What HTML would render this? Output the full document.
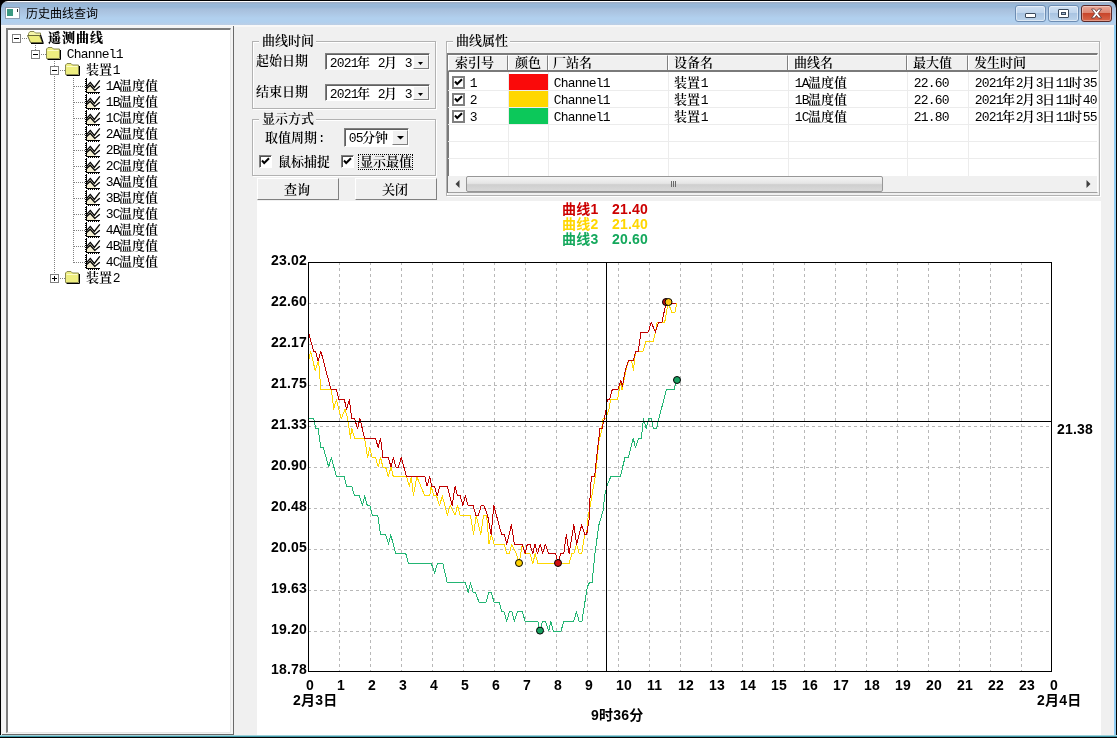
<!DOCTYPE html><html><head><meta charset="utf-8"><title>历史曲线查询</title><style>
html,body{margin:0;padding:0;}
body{width:1117px;height:738px;overflow:hidden;background:#f0f0f0;position:relative;font-family:"Liberation Mono","Noto Serif CJK SC",serif;font-size:13px;color:#000;}
div,span,svg{position:absolute;box-sizing:border-box;}
span.l{position:static;font-family:"Liberation Mono",monospace;letter-spacing:-0.8px;margin-left:0.7px;margin-right:-0.7px;}
.t{white-space:pre;line-height:15px;height:15px;font-weight:600;}
.t span.l{font-weight:400;}
.tb{white-space:pre;line-height:15px;height:15px;font-weight:900;font-size:13px;letter-spacing:1px;}
.tb span.l{font-weight:bold;}
.ti{white-space:pre;font-family:"Liberation Sans","Noto Sans CJK SC",sans-serif;font-size:12px;line-height:16px;}
.c{letter-spacing:0.2px;white-space:pre;font-family:"Liberation Sans","Noto Sans CJK SC",sans-serif;font-weight:bold;font-size:14px;line-height:16px;height:16px;}
.gb{border:1px solid #b2b2b2;box-shadow:1px 1px 0 #fff, inset 1px 1px 0 #fff;}
.gl{background:#f0f0f0;height:14px;}
.sunk{border:1px solid #808080;border-right-color:#fff;border-bottom-color:#fff;box-shadow:inset 1px 1px 0 #606060;background:#fff;}
.btn{background:#f0f0f0;border-top:1px solid #fff;border-left:1px solid #fff;border-right:1px solid #808080;border-bottom:1px solid #808080;}
.cb{width:13px;height:13px;background:#fff;border:1px solid #808080;border-right-color:#fff;border-bottom-color:#fff;box-shadow:inset 1px 1px 0 #505050;}
.hd{top:0;height:17px;background:#f0f0f0;border-right:1px solid #808080;border-bottom:1px solid #808080;border-top:1px solid #fff;border-left:1px solid #fff;}
</style></head><body><div style="left:0;top:0;width:1117px;height:738px;will-change:transform;">
<div style="left:0;top:0;width:1117px;height:25px;background:#000;"></div>
<div style="left:1px;top:1px;width:1115px;height:24px;border-radius:7px 7px 0 0;background:linear-gradient(to bottom,#ffffff 0,#ffffff 1px,#9eafc6 1px,#9eafc6 2px,#98b8d8 3px,#98b8d8 6px,#a6bfdc 8px,#acc6e3 12px,#b1d0ee 17px,#b1d0ee 21px,#bccee5 24px);"></div>
<div style="left:5px;top:7px;width:15px;height:12px;background:#fff;border:1px solid #8f9db0;"></div>
<div style="left:7px;top:9px;width:6px;height:7px;background:#3c9a82;"></div>
<div style="left:17px;top:9px;width:1px;height:3px;background:#333;"></div>
<div class="ti" style="left:26px;top:6px;">历史曲线查询</div>
<div style="left:1015px;top:5px;width:31px;height:17px;border-radius:3px;border:1px solid #6d8db3;background:linear-gradient(#cfe0f2 0%,#c0d5ec 45%,#a9c4e2 50%,#bcd3ea 100%);box-shadow:inset 0 0 0 1px rgba(255,255,255,.5);"></div>
<div style="left:1048px;top:5px;width:31px;height:17px;border-radius:3px;border:1px solid #6d8db3;background:linear-gradient(#cfe0f2 0%,#c0d5ec 45%,#a9c4e2 50%,#bcd3ea 100%);box-shadow:inset 0 0 0 1px rgba(255,255,255,.5);"></div>
<div style="left:1081px;top:5px;width:31px;height:17px;border-radius:3px;border:1px solid #5a2a2a;background:linear-gradient(#e9a99a 0%,#dd8672 45%,#c8452b 50%,#d8664a 100%);box-shadow:inset 0 0 0 1px rgba(255,255,255,.35);"></div>
<div style="left:1025px;top:13px;width:11px;height:5px;background:#fff;border:1px solid #3c4a5c;border-radius:1px;"></div>
<div style="left:1058px;top:9px;width:11px;height:9px;background:#fff;border:1px solid #3c4a5c;border-radius:1px;"></div>
<div style="left:1061px;top:12px;width:5px;height:3px;background:#9db4cf;border:1px solid #3c4a5c;"></div>
<svg style="left:1090px;top:8px" width="13" height="11" viewBox="0 0 13 11"><path d="M1.5 1 L4.5 1 L6.5 3.6 L8.5 1 L11.5 1 L8.2 5.5 L11.5 10 L8.5 10 L6.5 7.4 L4.5 10 L1.5 10 L4.8 5.5 Z" fill="#fff" stroke="#5a3030" stroke-width="0.8"/></svg>
<div style="left:1px;top:25px;width:1113px;height:711px;background:#f0f0f0;"></div>
<div style="left:1px;top:25px;width:1113px;height:2px;background:#f8f8f8;"></div>
<div style="left:1114px;top:25px;width:2px;height:712px;background:#8fcdf3;"></div>
<div style="left:1116px;top:6px;width:1px;height:732px;background:#000;"></div>
<div style="left:0;top:6px;width:1px;height:732px;background:#000;"></div>
<div style="left:0;top:735px;width:1117px;height:1px;background:#9fd0d8;"></div>
<div style="left:0;top:736px;width:1117px;height:1px;background:#3f97a6;"></div>
<div style="left:0;top:737px;width:1117px;height:1px;background:#000;"></div>
<div style="left:2px;top:26px;width:232px;height:709px;background:#f4f4f4;border-right:1px solid #696969;border-bottom:1px solid #696969;"></div>
<div style="left:6px;top:28px;width:225px;height:705px;background:#fff;border:2px solid #7c7c7c;border-right:1px solid #e8e8e8;border-bottom:1px solid #e8e8e8;"></div>
<div style="left:22px;top:38px;width:5px;height:1px;background:repeating-linear-gradient(to right,#808080 0 1px,transparent 1px 2px);"></div>
<div style="left:35px;top:45px;width:1px;height:5px;background:repeating-linear-gradient(to bottom,#808080 0 1px,transparent 1px 2px);"></div>
<div style="left:41px;top:54px;width:5px;height:1px;background:repeating-linear-gradient(to right,#808080 0 1px,transparent 1px 2px);"></div>
<div style="left:54px;top:61px;width:1px;height:5px;background:repeating-linear-gradient(to bottom,#808080 0 1px,transparent 1px 2px);"></div>
<div style="left:60px;top:70px;width:5px;height:1px;background:repeating-linear-gradient(to right,#808080 0 1px,transparent 1px 2px);"></div>
<div style="left:54px;top:76px;width:1px;height:198px;background:repeating-linear-gradient(to bottom,#808080 0 1px,transparent 1px 2px);"></div>
<div style="left:73px;top:78px;width:1px;height:185px;background:repeating-linear-gradient(to bottom,#808080 0 1px,transparent 1px 2px);"></div>
<div style="left:60px;top:278px;width:5px;height:1px;background:repeating-linear-gradient(to right,#808080 0 1px,transparent 1px 2px);"></div>
<div style="left:12px;top:34px;width:9px;height:9px;background:#fff;border:1px solid #808080;"></div>
<div style="left:14px;top:38px;width:5px;height:1px;background:#000;"></div>
<svg style="left:27px;top:30px" width="17" height="14" viewBox="0 0 17 14"><path d="M1.5 3.5 L3 1.5 L7 1.5 L8.5 3 L13.5 3 L13.5 5.5 L1.5 5.5 Z" fill="#f6f6a8" stroke="#8a8a52" stroke-width="1"/><path d="M0.5 5.5 L12.5 5.5 L15.5 12.5 L3.5 12.5 Z" fill="#eded7c" stroke="#6a6a3a" stroke-width="1"/><path d="M13.5 5 L16 12.5 L16 13.5 L4 13.5" fill="none" stroke="#000" stroke-width="1.2"/></svg>
<div class="tb" style="left:48px;top:31px;">遥测曲线</div>
<div style="left:31px;top:50px;width:9px;height:9px;background:#fff;border:1px solid #808080;"></div>
<div style="left:33px;top:54px;width:5px;height:1px;background:#000;"></div>
<svg style="left:45px;top:46px" width="17" height="14" viewBox="0 0 17 14"><path d="M1.5 3 L3 1.5 L7 1.5 L8.5 3 L14.5 3 L14.5 12.5 L1.5 12.5 Z" fill="#eeee80" stroke="#8a8a52" stroke-width="1"/><path d="M2.5 4.5 L13.5 4.5" stroke="#fbfbc8" stroke-width="1"/><path d="M15.5 4 L15.5 13.5 L2.5 13.5" fill="none" stroke="#000" stroke-width="1"/></svg>
<div class="t" style="left:66px;top:47px;"><span class="l">Channel1</span></div>
<div style="left:50px;top:66px;width:9px;height:9px;background:#fff;border:1px solid #808080;"></div>
<div style="left:52px;top:70px;width:5px;height:1px;background:#000;"></div>
<svg style="left:64px;top:62px" width="17" height="14" viewBox="0 0 17 14"><path d="M1.5 3 L3 1.5 L7 1.5 L8.5 3 L14.5 3 L14.5 12.5 L1.5 12.5 Z" fill="#eeee80" stroke="#8a8a52" stroke-width="1"/><path d="M2.5 4.5 L13.5 4.5" stroke="#fbfbc8" stroke-width="1"/><path d="M15.5 4 L15.5 13.5 L2.5 13.5" fill="none" stroke="#000" stroke-width="1"/></svg>
<div class="t" style="left:86px;top:63px;">装置<span class="l">1</span></div>
<div style="left:74px;top:86px;width:11px;height:1px;background:repeating-linear-gradient(to right,#808080 0 1px,transparent 1px 2px);"></div>
<svg style="left:84px;top:78px" width="17" height="16" viewBox="0 0 17 16"><path d="M3 10 L6 7 L11 12.5 L12.5 14 L3 14 Z" fill="#f3edd0"/><path d="M3 8.5 L6.2 4.8 L10.3 9.3 L15.6 2.6 L15.6 5.2 L10.6 11 L6.2 7 L3 10.5 Z" fill="#f6f2dc"/><rect x="2" y="0" width="1" height="15" fill="#000"/><rect x="2" y="14" width="14" height="1" fill="#000"/><rect x="1" y="1" width="1" height="1" fill="#000"/><rect x="1" y="3" width="1" height="1" fill="#000"/><rect x="1" y="5" width="1" height="1" fill="#000"/><rect x="1" y="7" width="1" height="1" fill="#000"/><rect x="1" y="9" width="1" height="1" fill="#000"/><rect x="1" y="11" width="1" height="1" fill="#000"/><rect x="1" y="13" width="1" height="1" fill="#000"/><rect x="4" y="15" width="1" height="1" fill="#000"/><rect x="6" y="15" width="1" height="1" fill="#000"/><rect x="8" y="15" width="1" height="1" fill="#000"/><rect x="10" y="15" width="1" height="1" fill="#000"/><rect x="12" y="15" width="1" height="1" fill="#000"/><rect x="14" y="15" width="1" height="1" fill="#000"/><path d="M2.6 8.6 L6.3 4.4 L10.3 9.4 L15.8 2.4" fill="none" stroke="#000" stroke-width="1.3"/><path d="M2.6 10.6 L6.2 7.2 L10.8 12.4 L15.8 8.2" fill="none" stroke="#000" stroke-width="1.3"/></svg>
<div class="t" style="left:105px;top:79px;"><span class="l">1A</span>温度值</div>
<div style="left:74px;top:102px;width:11px;height:1px;background:repeating-linear-gradient(to right,#808080 0 1px,transparent 1px 2px);"></div>
<svg style="left:84px;top:94px" width="17" height="16" viewBox="0 0 17 16"><path d="M3 10 L6 7 L11 12.5 L12.5 14 L3 14 Z" fill="#f3edd0"/><path d="M3 8.5 L6.2 4.8 L10.3 9.3 L15.6 2.6 L15.6 5.2 L10.6 11 L6.2 7 L3 10.5 Z" fill="#f6f2dc"/><rect x="2" y="0" width="1" height="15" fill="#000"/><rect x="2" y="14" width="14" height="1" fill="#000"/><rect x="1" y="1" width="1" height="1" fill="#000"/><rect x="1" y="3" width="1" height="1" fill="#000"/><rect x="1" y="5" width="1" height="1" fill="#000"/><rect x="1" y="7" width="1" height="1" fill="#000"/><rect x="1" y="9" width="1" height="1" fill="#000"/><rect x="1" y="11" width="1" height="1" fill="#000"/><rect x="1" y="13" width="1" height="1" fill="#000"/><rect x="4" y="15" width="1" height="1" fill="#000"/><rect x="6" y="15" width="1" height="1" fill="#000"/><rect x="8" y="15" width="1" height="1" fill="#000"/><rect x="10" y="15" width="1" height="1" fill="#000"/><rect x="12" y="15" width="1" height="1" fill="#000"/><rect x="14" y="15" width="1" height="1" fill="#000"/><path d="M2.6 8.6 L6.3 4.4 L10.3 9.4 L15.8 2.4" fill="none" stroke="#000" stroke-width="1.3"/><path d="M2.6 10.6 L6.2 7.2 L10.8 12.4 L15.8 8.2" fill="none" stroke="#000" stroke-width="1.3"/></svg>
<div class="t" style="left:105px;top:95px;"><span class="l">1B</span>温度值</div>
<div style="left:74px;top:118px;width:11px;height:1px;background:repeating-linear-gradient(to right,#808080 0 1px,transparent 1px 2px);"></div>
<svg style="left:84px;top:110px" width="17" height="16" viewBox="0 0 17 16"><path d="M3 10 L6 7 L11 12.5 L12.5 14 L3 14 Z" fill="#f3edd0"/><path d="M3 8.5 L6.2 4.8 L10.3 9.3 L15.6 2.6 L15.6 5.2 L10.6 11 L6.2 7 L3 10.5 Z" fill="#f6f2dc"/><rect x="2" y="0" width="1" height="15" fill="#000"/><rect x="2" y="14" width="14" height="1" fill="#000"/><rect x="1" y="1" width="1" height="1" fill="#000"/><rect x="1" y="3" width="1" height="1" fill="#000"/><rect x="1" y="5" width="1" height="1" fill="#000"/><rect x="1" y="7" width="1" height="1" fill="#000"/><rect x="1" y="9" width="1" height="1" fill="#000"/><rect x="1" y="11" width="1" height="1" fill="#000"/><rect x="1" y="13" width="1" height="1" fill="#000"/><rect x="4" y="15" width="1" height="1" fill="#000"/><rect x="6" y="15" width="1" height="1" fill="#000"/><rect x="8" y="15" width="1" height="1" fill="#000"/><rect x="10" y="15" width="1" height="1" fill="#000"/><rect x="12" y="15" width="1" height="1" fill="#000"/><rect x="14" y="15" width="1" height="1" fill="#000"/><path d="M2.6 8.6 L6.3 4.4 L10.3 9.4 L15.8 2.4" fill="none" stroke="#000" stroke-width="1.3"/><path d="M2.6 10.6 L6.2 7.2 L10.8 12.4 L15.8 8.2" fill="none" stroke="#000" stroke-width="1.3"/></svg>
<div class="t" style="left:105px;top:111px;"><span class="l">1C</span>温度值</div>
<div style="left:74px;top:134px;width:11px;height:1px;background:repeating-linear-gradient(to right,#808080 0 1px,transparent 1px 2px);"></div>
<svg style="left:84px;top:126px" width="17" height="16" viewBox="0 0 17 16"><path d="M3 10 L6 7 L11 12.5 L12.5 14 L3 14 Z" fill="#f3edd0"/><path d="M3 8.5 L6.2 4.8 L10.3 9.3 L15.6 2.6 L15.6 5.2 L10.6 11 L6.2 7 L3 10.5 Z" fill="#f6f2dc"/><rect x="2" y="0" width="1" height="15" fill="#000"/><rect x="2" y="14" width="14" height="1" fill="#000"/><rect x="1" y="1" width="1" height="1" fill="#000"/><rect x="1" y="3" width="1" height="1" fill="#000"/><rect x="1" y="5" width="1" height="1" fill="#000"/><rect x="1" y="7" width="1" height="1" fill="#000"/><rect x="1" y="9" width="1" height="1" fill="#000"/><rect x="1" y="11" width="1" height="1" fill="#000"/><rect x="1" y="13" width="1" height="1" fill="#000"/><rect x="4" y="15" width="1" height="1" fill="#000"/><rect x="6" y="15" width="1" height="1" fill="#000"/><rect x="8" y="15" width="1" height="1" fill="#000"/><rect x="10" y="15" width="1" height="1" fill="#000"/><rect x="12" y="15" width="1" height="1" fill="#000"/><rect x="14" y="15" width="1" height="1" fill="#000"/><path d="M2.6 8.6 L6.3 4.4 L10.3 9.4 L15.8 2.4" fill="none" stroke="#000" stroke-width="1.3"/><path d="M2.6 10.6 L6.2 7.2 L10.8 12.4 L15.8 8.2" fill="none" stroke="#000" stroke-width="1.3"/></svg>
<div class="t" style="left:105px;top:127px;"><span class="l">2A</span>温度值</div>
<div style="left:74px;top:150px;width:11px;height:1px;background:repeating-linear-gradient(to right,#808080 0 1px,transparent 1px 2px);"></div>
<svg style="left:84px;top:142px" width="17" height="16" viewBox="0 0 17 16"><path d="M3 10 L6 7 L11 12.5 L12.5 14 L3 14 Z" fill="#f3edd0"/><path d="M3 8.5 L6.2 4.8 L10.3 9.3 L15.6 2.6 L15.6 5.2 L10.6 11 L6.2 7 L3 10.5 Z" fill="#f6f2dc"/><rect x="2" y="0" width="1" height="15" fill="#000"/><rect x="2" y="14" width="14" height="1" fill="#000"/><rect x="1" y="1" width="1" height="1" fill="#000"/><rect x="1" y="3" width="1" height="1" fill="#000"/><rect x="1" y="5" width="1" height="1" fill="#000"/><rect x="1" y="7" width="1" height="1" fill="#000"/><rect x="1" y="9" width="1" height="1" fill="#000"/><rect x="1" y="11" width="1" height="1" fill="#000"/><rect x="1" y="13" width="1" height="1" fill="#000"/><rect x="4" y="15" width="1" height="1" fill="#000"/><rect x="6" y="15" width="1" height="1" fill="#000"/><rect x="8" y="15" width="1" height="1" fill="#000"/><rect x="10" y="15" width="1" height="1" fill="#000"/><rect x="12" y="15" width="1" height="1" fill="#000"/><rect x="14" y="15" width="1" height="1" fill="#000"/><path d="M2.6 8.6 L6.3 4.4 L10.3 9.4 L15.8 2.4" fill="none" stroke="#000" stroke-width="1.3"/><path d="M2.6 10.6 L6.2 7.2 L10.8 12.4 L15.8 8.2" fill="none" stroke="#000" stroke-width="1.3"/></svg>
<div class="t" style="left:105px;top:143px;"><span class="l">2B</span>温度值</div>
<div style="left:74px;top:166px;width:11px;height:1px;background:repeating-linear-gradient(to right,#808080 0 1px,transparent 1px 2px);"></div>
<svg style="left:84px;top:158px" width="17" height="16" viewBox="0 0 17 16"><path d="M3 10 L6 7 L11 12.5 L12.5 14 L3 14 Z" fill="#f3edd0"/><path d="M3 8.5 L6.2 4.8 L10.3 9.3 L15.6 2.6 L15.6 5.2 L10.6 11 L6.2 7 L3 10.5 Z" fill="#f6f2dc"/><rect x="2" y="0" width="1" height="15" fill="#000"/><rect x="2" y="14" width="14" height="1" fill="#000"/><rect x="1" y="1" width="1" height="1" fill="#000"/><rect x="1" y="3" width="1" height="1" fill="#000"/><rect x="1" y="5" width="1" height="1" fill="#000"/><rect x="1" y="7" width="1" height="1" fill="#000"/><rect x="1" y="9" width="1" height="1" fill="#000"/><rect x="1" y="11" width="1" height="1" fill="#000"/><rect x="1" y="13" width="1" height="1" fill="#000"/><rect x="4" y="15" width="1" height="1" fill="#000"/><rect x="6" y="15" width="1" height="1" fill="#000"/><rect x="8" y="15" width="1" height="1" fill="#000"/><rect x="10" y="15" width="1" height="1" fill="#000"/><rect x="12" y="15" width="1" height="1" fill="#000"/><rect x="14" y="15" width="1" height="1" fill="#000"/><path d="M2.6 8.6 L6.3 4.4 L10.3 9.4 L15.8 2.4" fill="none" stroke="#000" stroke-width="1.3"/><path d="M2.6 10.6 L6.2 7.2 L10.8 12.4 L15.8 8.2" fill="none" stroke="#000" stroke-width="1.3"/></svg>
<div class="t" style="left:105px;top:159px;"><span class="l">2C</span>温度值</div>
<div style="left:74px;top:182px;width:11px;height:1px;background:repeating-linear-gradient(to right,#808080 0 1px,transparent 1px 2px);"></div>
<svg style="left:84px;top:174px" width="17" height="16" viewBox="0 0 17 16"><path d="M3 10 L6 7 L11 12.5 L12.5 14 L3 14 Z" fill="#f3edd0"/><path d="M3 8.5 L6.2 4.8 L10.3 9.3 L15.6 2.6 L15.6 5.2 L10.6 11 L6.2 7 L3 10.5 Z" fill="#f6f2dc"/><rect x="2" y="0" width="1" height="15" fill="#000"/><rect x="2" y="14" width="14" height="1" fill="#000"/><rect x="1" y="1" width="1" height="1" fill="#000"/><rect x="1" y="3" width="1" height="1" fill="#000"/><rect x="1" y="5" width="1" height="1" fill="#000"/><rect x="1" y="7" width="1" height="1" fill="#000"/><rect x="1" y="9" width="1" height="1" fill="#000"/><rect x="1" y="11" width="1" height="1" fill="#000"/><rect x="1" y="13" width="1" height="1" fill="#000"/><rect x="4" y="15" width="1" height="1" fill="#000"/><rect x="6" y="15" width="1" height="1" fill="#000"/><rect x="8" y="15" width="1" height="1" fill="#000"/><rect x="10" y="15" width="1" height="1" fill="#000"/><rect x="12" y="15" width="1" height="1" fill="#000"/><rect x="14" y="15" width="1" height="1" fill="#000"/><path d="M2.6 8.6 L6.3 4.4 L10.3 9.4 L15.8 2.4" fill="none" stroke="#000" stroke-width="1.3"/><path d="M2.6 10.6 L6.2 7.2 L10.8 12.4 L15.8 8.2" fill="none" stroke="#000" stroke-width="1.3"/></svg>
<div class="t" style="left:105px;top:175px;"><span class="l">3A</span>温度值</div>
<div style="left:74px;top:198px;width:11px;height:1px;background:repeating-linear-gradient(to right,#808080 0 1px,transparent 1px 2px);"></div>
<svg style="left:84px;top:190px" width="17" height="16" viewBox="0 0 17 16"><path d="M3 10 L6 7 L11 12.5 L12.5 14 L3 14 Z" fill="#f3edd0"/><path d="M3 8.5 L6.2 4.8 L10.3 9.3 L15.6 2.6 L15.6 5.2 L10.6 11 L6.2 7 L3 10.5 Z" fill="#f6f2dc"/><rect x="2" y="0" width="1" height="15" fill="#000"/><rect x="2" y="14" width="14" height="1" fill="#000"/><rect x="1" y="1" width="1" height="1" fill="#000"/><rect x="1" y="3" width="1" height="1" fill="#000"/><rect x="1" y="5" width="1" height="1" fill="#000"/><rect x="1" y="7" width="1" height="1" fill="#000"/><rect x="1" y="9" width="1" height="1" fill="#000"/><rect x="1" y="11" width="1" height="1" fill="#000"/><rect x="1" y="13" width="1" height="1" fill="#000"/><rect x="4" y="15" width="1" height="1" fill="#000"/><rect x="6" y="15" width="1" height="1" fill="#000"/><rect x="8" y="15" width="1" height="1" fill="#000"/><rect x="10" y="15" width="1" height="1" fill="#000"/><rect x="12" y="15" width="1" height="1" fill="#000"/><rect x="14" y="15" width="1" height="1" fill="#000"/><path d="M2.6 8.6 L6.3 4.4 L10.3 9.4 L15.8 2.4" fill="none" stroke="#000" stroke-width="1.3"/><path d="M2.6 10.6 L6.2 7.2 L10.8 12.4 L15.8 8.2" fill="none" stroke="#000" stroke-width="1.3"/></svg>
<div class="t" style="left:105px;top:191px;"><span class="l">3B</span>温度值</div>
<div style="left:74px;top:214px;width:11px;height:1px;background:repeating-linear-gradient(to right,#808080 0 1px,transparent 1px 2px);"></div>
<svg style="left:84px;top:206px" width="17" height="16" viewBox="0 0 17 16"><path d="M3 10 L6 7 L11 12.5 L12.5 14 L3 14 Z" fill="#f3edd0"/><path d="M3 8.5 L6.2 4.8 L10.3 9.3 L15.6 2.6 L15.6 5.2 L10.6 11 L6.2 7 L3 10.5 Z" fill="#f6f2dc"/><rect x="2" y="0" width="1" height="15" fill="#000"/><rect x="2" y="14" width="14" height="1" fill="#000"/><rect x="1" y="1" width="1" height="1" fill="#000"/><rect x="1" y="3" width="1" height="1" fill="#000"/><rect x="1" y="5" width="1" height="1" fill="#000"/><rect x="1" y="7" width="1" height="1" fill="#000"/><rect x="1" y="9" width="1" height="1" fill="#000"/><rect x="1" y="11" width="1" height="1" fill="#000"/><rect x="1" y="13" width="1" height="1" fill="#000"/><rect x="4" y="15" width="1" height="1" fill="#000"/><rect x="6" y="15" width="1" height="1" fill="#000"/><rect x="8" y="15" width="1" height="1" fill="#000"/><rect x="10" y="15" width="1" height="1" fill="#000"/><rect x="12" y="15" width="1" height="1" fill="#000"/><rect x="14" y="15" width="1" height="1" fill="#000"/><path d="M2.6 8.6 L6.3 4.4 L10.3 9.4 L15.8 2.4" fill="none" stroke="#000" stroke-width="1.3"/><path d="M2.6 10.6 L6.2 7.2 L10.8 12.4 L15.8 8.2" fill="none" stroke="#000" stroke-width="1.3"/></svg>
<div class="t" style="left:105px;top:207px;"><span class="l">3C</span>温度值</div>
<div style="left:74px;top:230px;width:11px;height:1px;background:repeating-linear-gradient(to right,#808080 0 1px,transparent 1px 2px);"></div>
<svg style="left:84px;top:222px" width="17" height="16" viewBox="0 0 17 16"><path d="M3 10 L6 7 L11 12.5 L12.5 14 L3 14 Z" fill="#f3edd0"/><path d="M3 8.5 L6.2 4.8 L10.3 9.3 L15.6 2.6 L15.6 5.2 L10.6 11 L6.2 7 L3 10.5 Z" fill="#f6f2dc"/><rect x="2" y="0" width="1" height="15" fill="#000"/><rect x="2" y="14" width="14" height="1" fill="#000"/><rect x="1" y="1" width="1" height="1" fill="#000"/><rect x="1" y="3" width="1" height="1" fill="#000"/><rect x="1" y="5" width="1" height="1" fill="#000"/><rect x="1" y="7" width="1" height="1" fill="#000"/><rect x="1" y="9" width="1" height="1" fill="#000"/><rect x="1" y="11" width="1" height="1" fill="#000"/><rect x="1" y="13" width="1" height="1" fill="#000"/><rect x="4" y="15" width="1" height="1" fill="#000"/><rect x="6" y="15" width="1" height="1" fill="#000"/><rect x="8" y="15" width="1" height="1" fill="#000"/><rect x="10" y="15" width="1" height="1" fill="#000"/><rect x="12" y="15" width="1" height="1" fill="#000"/><rect x="14" y="15" width="1" height="1" fill="#000"/><path d="M2.6 8.6 L6.3 4.4 L10.3 9.4 L15.8 2.4" fill="none" stroke="#000" stroke-width="1.3"/><path d="M2.6 10.6 L6.2 7.2 L10.8 12.4 L15.8 8.2" fill="none" stroke="#000" stroke-width="1.3"/></svg>
<div class="t" style="left:105px;top:223px;"><span class="l">4A</span>温度值</div>
<div style="left:74px;top:246px;width:11px;height:1px;background:repeating-linear-gradient(to right,#808080 0 1px,transparent 1px 2px);"></div>
<svg style="left:84px;top:238px" width="17" height="16" viewBox="0 0 17 16"><path d="M3 10 L6 7 L11 12.5 L12.5 14 L3 14 Z" fill="#f3edd0"/><path d="M3 8.5 L6.2 4.8 L10.3 9.3 L15.6 2.6 L15.6 5.2 L10.6 11 L6.2 7 L3 10.5 Z" fill="#f6f2dc"/><rect x="2" y="0" width="1" height="15" fill="#000"/><rect x="2" y="14" width="14" height="1" fill="#000"/><rect x="1" y="1" width="1" height="1" fill="#000"/><rect x="1" y="3" width="1" height="1" fill="#000"/><rect x="1" y="5" width="1" height="1" fill="#000"/><rect x="1" y="7" width="1" height="1" fill="#000"/><rect x="1" y="9" width="1" height="1" fill="#000"/><rect x="1" y="11" width="1" height="1" fill="#000"/><rect x="1" y="13" width="1" height="1" fill="#000"/><rect x="4" y="15" width="1" height="1" fill="#000"/><rect x="6" y="15" width="1" height="1" fill="#000"/><rect x="8" y="15" width="1" height="1" fill="#000"/><rect x="10" y="15" width="1" height="1" fill="#000"/><rect x="12" y="15" width="1" height="1" fill="#000"/><rect x="14" y="15" width="1" height="1" fill="#000"/><path d="M2.6 8.6 L6.3 4.4 L10.3 9.4 L15.8 2.4" fill="none" stroke="#000" stroke-width="1.3"/><path d="M2.6 10.6 L6.2 7.2 L10.8 12.4 L15.8 8.2" fill="none" stroke="#000" stroke-width="1.3"/></svg>
<div class="t" style="left:105px;top:239px;"><span class="l">4B</span>温度值</div>
<div style="left:74px;top:262px;width:11px;height:1px;background:repeating-linear-gradient(to right,#808080 0 1px,transparent 1px 2px);"></div>
<svg style="left:84px;top:254px" width="17" height="16" viewBox="0 0 17 16"><path d="M3 10 L6 7 L11 12.5 L12.5 14 L3 14 Z" fill="#f3edd0"/><path d="M3 8.5 L6.2 4.8 L10.3 9.3 L15.6 2.6 L15.6 5.2 L10.6 11 L6.2 7 L3 10.5 Z" fill="#f6f2dc"/><rect x="2" y="0" width="1" height="15" fill="#000"/><rect x="2" y="14" width="14" height="1" fill="#000"/><rect x="1" y="1" width="1" height="1" fill="#000"/><rect x="1" y="3" width="1" height="1" fill="#000"/><rect x="1" y="5" width="1" height="1" fill="#000"/><rect x="1" y="7" width="1" height="1" fill="#000"/><rect x="1" y="9" width="1" height="1" fill="#000"/><rect x="1" y="11" width="1" height="1" fill="#000"/><rect x="1" y="13" width="1" height="1" fill="#000"/><rect x="4" y="15" width="1" height="1" fill="#000"/><rect x="6" y="15" width="1" height="1" fill="#000"/><rect x="8" y="15" width="1" height="1" fill="#000"/><rect x="10" y="15" width="1" height="1" fill="#000"/><rect x="12" y="15" width="1" height="1" fill="#000"/><rect x="14" y="15" width="1" height="1" fill="#000"/><path d="M2.6 8.6 L6.3 4.4 L10.3 9.4 L15.8 2.4" fill="none" stroke="#000" stroke-width="1.3"/><path d="M2.6 10.6 L6.2 7.2 L10.8 12.4 L15.8 8.2" fill="none" stroke="#000" stroke-width="1.3"/></svg>
<div class="t" style="left:105px;top:255px;"><span class="l">4C</span>温度值</div>
<div style="left:50px;top:274px;width:9px;height:9px;background:#fff;border:1px solid #808080;"></div>
<div style="left:52px;top:278px;width:5px;height:1px;background:#000;"></div>
<div style="left:54px;top:276px;width:1px;height:5px;background:#000;"></div>
<svg style="left:64px;top:270px" width="17" height="14" viewBox="0 0 17 14"><path d="M1.5 3 L3 1.5 L7 1.5 L8.5 3 L14.5 3 L14.5 12.5 L1.5 12.5 Z" fill="#eeee80" stroke="#8a8a52" stroke-width="1"/><path d="M2.5 4.5 L13.5 4.5" stroke="#fbfbc8" stroke-width="1"/><path d="M15.5 4 L15.5 13.5 L2.5 13.5" fill="none" stroke="#000" stroke-width="1"/></svg>
<div class="t" style="left:86px;top:271px;">装置<span class="l">2</span></div>
<div class="gb" style="left:252px;top:41px;width:184px;height:68px;"></div>
<div class="gl" style="left:259px;top:35px;width:57px;"></div>
<div class="t" style="left:262px;top:34px;">曲线时间</div>
<div class="t" style="left:256px;top:54px;">起始日期</div>
<div class="t" style="left:256px;top:85px;">结束日期</div>
<div class="sunk" style="left:325px;top:53px;width:105px;height:17px;"></div>
<div class="t" style="left:329px;top:56px;"><span class="l">2021</span>年<span class="l"> 2</span>月<span class="l"> 3</span></div>
<div class="btn" style="left:413px;top:55px;width:16px;height:14px;"></div>
<svg style="left:418px;top:62px" width="5" height="3" viewBox="0 0 5 3"><path d="M0 0 L5 0 L2.5 3 Z" fill="#000"/></svg>
<div class="sunk" style="left:325px;top:84px;width:105px;height:17px;"></div>
<div class="t" style="left:329px;top:87px;"><span class="l">2021</span>年<span class="l"> 2</span>月<span class="l"> 3</span></div>
<div class="btn" style="left:413px;top:86px;width:16px;height:14px;"></div>
<svg style="left:418px;top:93px" width="5" height="3" viewBox="0 0 5 3"><path d="M0 0 L5 0 L2.5 3 Z" fill="#000"/></svg>
<div class="gb" style="left:252px;top:119px;width:184px;height:57px;"></div>
<div class="gl" style="left:259px;top:113px;width:57px;"></div>
<div class="t" style="left:262px;top:112px;">显示方式</div>
<div class="t" style="left:265px;top:131px;">取值周期<span class="l">:</span></div>
<div class="sunk" style="left:344px;top:128px;width:65px;height:19px;"></div>
<div class="t" style="left:348px;top:131px;"><span class="l">05</span>分钟</div>
<div class="btn" style="left:392px;top:130px;width:16px;height:15px;"></div>
<svg style="left:397px;top:136px" width="7" height="4" viewBox="0 0 7 4"><path d="M0 0 L7 0 L3.5 3.6 Z" fill="#000"/></svg>
<div class="cb" style="left:259px;top:155px;"></div>
<svg style="left:261px;top:157px" width="9" height="9" viewBox="0 0 9 9"><path d="M1 3.5 L3.2 6 L8 1.2" fill="none" stroke="#000" stroke-width="2"/></svg>
<div class="t" style="left:278px;top:155px;">鼠标捕捉</div>
<div class="cb" style="left:341px;top:155px;"></div>
<svg style="left:343px;top:157px" width="9" height="9" viewBox="0 0 9 9"><path d="M1 3.5 L3.2 6 L8 1.2" fill="none" stroke="#000" stroke-width="2"/></svg>
<div class="t" style="left:360px;top:155px;">显示最值</div>
<div style="left:358px;top:154px;width:55px;height:16px;border:1px dotted #000;"></div>
<div class="btn" style="left:257px;top:178px;width:82px;height:22px;"></div>
<div class="t" style="left:284px;top:183px;">查询</div>
<div class="btn" style="left:355px;top:178px;width:82px;height:22px;"></div>
<div class="t" style="left:382px;top:183px;">关闭</div>
<div class="gb" style="left:446px;top:41px;width:654px;height:155px;"></div>
<div class="gl" style="left:453px;top:35px;width:57px;"></div>
<div class="t" style="left:456px;top:34px;">曲线属性</div>
<div style="left:447px;top:53px;width:651px;height:140px;background:#fff;border:1px solid #7a7a7a;border-top-width:2px;border-left-width:2px;border-right-color:#fff;border-bottom-color:#a0a0a0;overflow:hidden;"></div>
<div class="hd" style="left:448px;top:55px;width:60px;height:16px;"></div>
<div class="t" style="left:455px;top:56px;">索引号</div>
<div class="hd" style="left:508px;top:55px;width:40px;height:16px;"></div>
<div class="t" style="left:515px;top:56px;">颜色</div>
<div class="hd" style="left:548px;top:55px;width:120px;height:16px;"></div>
<div class="t" style="left:553px;top:56px;">厂站名</div>
<div class="hd" style="left:668px;top:55px;width:120px;height:16px;"></div>
<div class="t" style="left:674px;top:56px;">设备名</div>
<div class="hd" style="left:788px;top:55px;width:119px;height:16px;"></div>
<div class="t" style="left:794px;top:56px;">曲线名</div>
<div class="hd" style="left:907px;top:55px;width:61px;height:16px;"></div>
<div class="t" style="left:913px;top:56px;">最大值</div>
<div class="hd" style="left:968px;top:55px;width:130px;height:16px;border-right:none;"></div>
<div class="t" style="left:974px;top:56px;">发生时间</div>
<div style="left:449px;top:70px;width:648px;height:2px;background:#7a7a7a;"></div>
<div style="left:508px;top:72px;width:1px;height:104px;background:#ececec;"></div>
<div style="left:548px;top:72px;width:1px;height:104px;background:#ececec;"></div>
<div style="left:668px;top:72px;width:1px;height:104px;background:#ececec;"></div>
<div style="left:788px;top:72px;width:1px;height:104px;background:#ececec;"></div>
<div style="left:907px;top:72px;width:1px;height:104px;background:#ececec;"></div>
<div style="left:968px;top:72px;width:1px;height:104px;background:#ececec;"></div>
<div style="left:448px;top:90px;width:649px;height:1px;background:#ececec;"></div>
<div style="left:448px;top:107px;width:649px;height:1px;background:#ececec;"></div>
<div style="left:448px;top:124px;width:649px;height:1px;background:#ececec;"></div>
<div style="left:448px;top:141px;width:649px;height:1px;background:#ececec;"></div>
<div style="left:448px;top:158px;width:649px;height:1px;background:#ececec;"></div>
<div style="left:452px;top:76px;width:13px;height:13px;background:#fff;border:2px solid #808080;"></div>
<svg style="left:454px;top:78px" width="9" height="9" viewBox="0 0 9 9"><path d="M1 3.5 L3.2 6 L8 1.2" fill="none" stroke="#000" stroke-width="2"/></svg>
<div class="t" style="left:469px;top:76px;"><span class="l">1</span></div>
<div style="left:509px;top:74px;width:39px;height:16px;background:#fa0a0a;"></div>
<div class="t" style="left:553px;top:76px;"><span class="l">Channel1</span></div>
<div class="t" style="left:674px;top:76px;">装置<span class="l">1</span></div>
<div class="t" style="left:794px;top:76px;"><span class="l">1A</span>温度值</div>
<div class="t" style="left:913px;top:76px;"><span class="l">22.60</span></div>
<div class="t" style="left:974px;top:76px;"><span class="l">2021</span>年<span class="l">2</span>月<span class="l">3</span>日<span class="l">11</span>时<span class="l">35</span></div>
<div style="left:452px;top:93px;width:13px;height:13px;background:#fff;border:2px solid #808080;"></div>
<svg style="left:454px;top:95px" width="9" height="9" viewBox="0 0 9 9"><path d="M1 3.5 L3.2 6 L8 1.2" fill="none" stroke="#000" stroke-width="2"/></svg>
<div class="t" style="left:469px;top:93px;"><span class="l">2</span></div>
<div style="left:509px;top:91px;width:39px;height:16px;background:#ffd700;"></div>
<div class="t" style="left:553px;top:93px;"><span class="l">Channel1</span></div>
<div class="t" style="left:674px;top:93px;">装置<span class="l">1</span></div>
<div class="t" style="left:794px;top:93px;"><span class="l">1B</span>温度值</div>
<div class="t" style="left:913px;top:93px;"><span class="l">22.60</span></div>
<div class="t" style="left:974px;top:93px;"><span class="l">2021</span>年<span class="l">2</span>月<span class="l">3</span>日<span class="l">11</span>时<span class="l">40</span></div>
<div style="left:452px;top:110px;width:13px;height:13px;background:#fff;border:2px solid #808080;"></div>
<svg style="left:454px;top:112px" width="9" height="9" viewBox="0 0 9 9"><path d="M1 3.5 L3.2 6 L8 1.2" fill="none" stroke="#000" stroke-width="2"/></svg>
<div class="t" style="left:469px;top:110px;"><span class="l">3</span></div>
<div style="left:509px;top:108px;width:39px;height:16px;background:#0cc85a;"></div>
<div class="t" style="left:553px;top:110px;"><span class="l">Channel1</span></div>
<div class="t" style="left:674px;top:110px;">装置<span class="l">1</span></div>
<div class="t" style="left:794px;top:110px;"><span class="l">1C</span>温度值</div>
<div class="t" style="left:913px;top:110px;"><span class="l">21.80</span></div>
<div class="t" style="left:974px;top:110px;"><span class="l">2021</span>年<span class="l">2</span>月<span class="l">3</span>日<span class="l">11</span>时<span class="l">55</span></div>
<div style="left:448px;top:176px;width:649px;height:16px;background:#f0f0f0;"></div>
<div style="left:466px;top:176px;width:417px;height:16px;border:1px solid #979797;border-radius:2px;background:linear-gradient(#f4f4f4 0%,#e6e6e6 45%,#cfcfcf 55%,#d9d9d9 100%);"></div>
<div style="left:671px;top:181px;width:1px;height:6px;background:#6a6a6a;"></div>
<div style="left:673px;top:181px;width:1px;height:6px;background:#6a6a6a;"></div>
<div style="left:675px;top:181px;width:1px;height:6px;background:#6a6a6a;"></div>
<svg style="left:455px;top:180px" width="5" height="8" viewBox="0 0 5 8"><path d="M4.5 0 L4.5 8 L0.5 4 Z" fill="#404040"/></svg>
<svg style="left:1086px;top:180px" width="5" height="8" viewBox="0 0 5 8"><path d="M0.5 0 L0.5 8 L4.5 4 Z" fill="#404040"/></svg>
<div style="left:257px;top:201px;width:844px;height:534px;background:#fff;"></div>
<svg style="left:0;top:0" width="1117" height="738" viewBox="0 0 1117 738" shape-rendering="crispEdges"><line x1="339.5" y1="262" x2="339.5" y2="671" stroke="#b8b8b8" stroke-width="1" stroke-dasharray="3 3"/><line x1="370.5" y1="262" x2="370.5" y2="671" stroke="#b8b8b8" stroke-width="1" stroke-dasharray="3 3"/><line x1="401.5" y1="262" x2="401.5" y2="671" stroke="#b8b8b8" stroke-width="1" stroke-dasharray="3 3"/><line x1="432.5" y1="262" x2="432.5" y2="671" stroke="#b8b8b8" stroke-width="1" stroke-dasharray="3 3"/><line x1="463.5" y1="262" x2="463.5" y2="671" stroke="#b8b8b8" stroke-width="1" stroke-dasharray="3 3"/><line x1="494.5" y1="262" x2="494.5" y2="671" stroke="#b8b8b8" stroke-width="1" stroke-dasharray="3 3"/><line x1="525.5" y1="262" x2="525.5" y2="671" stroke="#b8b8b8" stroke-width="1" stroke-dasharray="3 3"/><line x1="556.5" y1="262" x2="556.5" y2="671" stroke="#b8b8b8" stroke-width="1" stroke-dasharray="3 3"/><line x1="587.5" y1="262" x2="587.5" y2="671" stroke="#b8b8b8" stroke-width="1" stroke-dasharray="3 3"/><line x1="618.5" y1="262" x2="618.5" y2="671" stroke="#b8b8b8" stroke-width="1" stroke-dasharray="3 3"/><line x1="649.5" y1="262" x2="649.5" y2="671" stroke="#b8b8b8" stroke-width="1" stroke-dasharray="3 3"/><line x1="680.5" y1="262" x2="680.5" y2="671" stroke="#b8b8b8" stroke-width="1" stroke-dasharray="3 3"/><line x1="711.5" y1="262" x2="711.5" y2="671" stroke="#b8b8b8" stroke-width="1" stroke-dasharray="3 3"/><line x1="742.5" y1="262" x2="742.5" y2="671" stroke="#b8b8b8" stroke-width="1" stroke-dasharray="3 3"/><line x1="773.5" y1="262" x2="773.5" y2="671" stroke="#b8b8b8" stroke-width="1" stroke-dasharray="3 3"/><line x1="804.5" y1="262" x2="804.5" y2="671" stroke="#b8b8b8" stroke-width="1" stroke-dasharray="3 3"/><line x1="835.5" y1="262" x2="835.5" y2="671" stroke="#b8b8b8" stroke-width="1" stroke-dasharray="3 3"/><line x1="866.5" y1="262" x2="866.5" y2="671" stroke="#b8b8b8" stroke-width="1" stroke-dasharray="3 3"/><line x1="897.5" y1="262" x2="897.5" y2="671" stroke="#b8b8b8" stroke-width="1" stroke-dasharray="3 3"/><line x1="928.5" y1="262" x2="928.5" y2="671" stroke="#b8b8b8" stroke-width="1" stroke-dasharray="3 3"/><line x1="959.5" y1="262" x2="959.5" y2="671" stroke="#b8b8b8" stroke-width="1" stroke-dasharray="3 3"/><line x1="990.5" y1="262" x2="990.5" y2="671" stroke="#b8b8b8" stroke-width="1" stroke-dasharray="3 3"/><line x1="1021.5" y1="262" x2="1021.5" y2="671" stroke="#b8b8b8" stroke-width="1" stroke-dasharray="3 3"/><line x1="308" y1="303.5" x2="1051" y2="303.5" stroke="#b8b8b8" stroke-width="1" stroke-dasharray="3 3"/><line x1="308" y1="344.5" x2="1051" y2="344.5" stroke="#b8b8b8" stroke-width="1" stroke-dasharray="3 3"/><line x1="308" y1="385.5" x2="1051" y2="385.5" stroke="#b8b8b8" stroke-width="1" stroke-dasharray="3 3"/><line x1="308" y1="426.5" x2="1051" y2="426.5" stroke="#b8b8b8" stroke-width="1" stroke-dasharray="3 3"/><line x1="308" y1="467.5" x2="1051" y2="467.5" stroke="#b8b8b8" stroke-width="1" stroke-dasharray="3 3"/><line x1="308" y1="508.5" x2="1051" y2="508.5" stroke="#b8b8b8" stroke-width="1" stroke-dasharray="3 3"/><line x1="308" y1="549.5" x2="1051" y2="549.5" stroke="#b8b8b8" stroke-width="1" stroke-dasharray="3 3"/><line x1="308" y1="590.5" x2="1051" y2="590.5" stroke="#b8b8b8" stroke-width="1" stroke-dasharray="3 3"/><line x1="308" y1="631.5" x2="1051" y2="631.5" stroke="#b8b8b8" stroke-width="1" stroke-dasharray="3 3"/></svg>
<svg style="left:0;top:0" width="1117" height="738" viewBox="0 0 1117 738"><polyline shape-rendering="crispEdges" fill="none" stroke="#22b573" stroke-width="1" stroke-linejoin="round" points="308.5,418.8 313.8,418.8 315.6,428.4 318.1,428.4 320.9,447.7 323.3,447.7 328.7,467.0 331.4,457.4 336.4,476.7 344.3,476.7 346.6,486.3 351.7,486.3 354.5,495.9 359.5,495.9 362.5,505.6 364.6,495.9 367.3,505.6 370.0,505.6 372.4,515.2 377.8,515.2 380.5,534.5 385.5,534.5 388.6,544.2 390.7,534.5 395.8,553.8 405.8,553.8 408.5,563.5 431.3,563.5 434.7,573.1 437.4,563.5 442.8,563.5 447.3,582.8 465.3,582.8 468.3,592.4 470.5,582.8 473.2,592.4 475.5,592.4 478.9,602.0 486.3,602.0 488.6,592.4 491.3,592.4 494.0,602.0 499.2,602.0 501.6,611.7 504.0,611.7 506.7,621.3 509.4,611.7 512.0,611.7 514.4,621.3 517.5,611.7 522.2,611.7 525.2,621.3 537.8,621.3 539.9,631.0 542.6,621.3 545.6,621.3 548.7,631.0 550.7,621.3 553.4,631.0 560.9,631.0 564.0,621.3 573.7,621.3 576.4,611.7 579.1,621.3 581.9,621.3 587.3,587.0 589.3,582.8 592.0,582.8 594.9,553.8 598.9,524.9 603.0,510.8 604.7,495.9 606.7,486.3 610.8,476.7 620.3,476.7 625.0,457.4 628.4,457.4 633.2,438.1 635.5,447.7 638.6,438.1 641.3,438.1 643.5,418.8 646.2,428.4 648.5,418.8 651.2,418.8 653.4,428.4 656.7,428.4 658.8,418.8 666.4,389.8 674.0,389.8 676.7,380.2"/><polyline shape-rendering="crispEdges" fill="none" stroke="#ffd700" stroke-width="1" stroke-linejoin="round" points="308.5,360.9 310.7,351.3 315.2,370.5 318.6,360.9 320.9,389.8 331.4,389.8 333.7,409.1 336.4,399.5 341.3,418.8 345.0,409.1 347.7,418.8 350.4,438.1 351.7,428.4 354.5,438.1 364.6,438.1 367.6,457.4 369.8,447.7 372.1,457.4 375.5,457.4 378.2,467.0 380.5,457.4 382.9,467.0 385.6,467.0 388.3,476.7 391.0,467.0 393.3,476.7 406.6,476.7 409.3,486.3 411.4,476.7 413.4,495.9 416.8,476.7 424.9,495.9 429.7,495.9 431.1,486.3 433.8,495.9 436.5,495.9 439.6,505.6 442.3,495.9 447.4,515.2 450.1,505.6 455.1,515.2 457.5,505.6 460.2,515.2 470.4,515.2 473.5,534.5 476.2,515.2 480.8,534.5 483.5,515.2 486.6,515.2 489.0,544.2 491.4,534.5 494.1,544.2 504.3,544.2 506.7,553.8 509.3,553.8 511.7,544.2 516.5,553.8 519.0,563.5 522.4,544.2 525.1,553.8 530.1,553.8 532.8,563.5 535.2,553.8 537.9,563.5 569.1,563.5 571.8,553.8 573.8,553.8 576.6,544.2 579.3,553.8 581.7,553.8 584.7,534.5 586.7,534.5 587.8,519.6 595.2,476.7 599.3,438.1 600.8,434.7 603.0,418.8 605.7,418.8 609.0,409.1 610.6,399.5 617.6,399.5 620.9,380.2 622.0,389.8 625.8,370.5 628.5,360.9 631.7,360.9 633.4,370.5 635.6,351.3 643.0,351.3 645.7,341.6 649.1,341.6 653.2,341.6 655.5,332.0 657.2,322.3 661.3,322.3 664.7,322.3 668.1,303.0 670.8,309.4 672.1,312.7 674.9,312.7 676.9,303.0"/><polyline shape-rendering="crispEdges" fill="none" stroke="#c00000" stroke-width="1" stroke-linejoin="round" points="308.5,332.0 311.0,341.6 313.6,351.3 315.6,351.3 318.1,360.9 320.9,351.3 330.1,386.4 331.4,389.8 336.4,389.8 338.9,399.5 344.3,399.5 346.6,409.1 349.4,399.5 351.7,418.8 354.5,418.8 357.6,428.4 359.9,418.8 364.6,438.1 375.5,438.1 378.2,447.7 380.5,438.1 382.9,457.4 388.3,457.4 391.0,467.0 393.3,457.4 395.8,467.0 398.5,467.0 401.2,457.4 406.6,476.7 424.9,476.7 427.0,486.3 429.7,476.7 431.8,486.3 434.5,486.3 437.2,495.9 439.6,486.3 447.4,486.3 452.1,505.6 455.1,486.3 457.5,495.9 460.2,495.9 462.9,505.6 465.4,495.9 468.1,505.6 473.1,505.6 475.8,515.2 478.5,515.2 481.2,505.6 483.9,505.6 487.6,515.2 491.1,534.5 493.8,505.6 501.6,534.5 504.3,534.5 506.7,544.2 511.4,524.9 514.4,544.2 521.9,544.2 525.3,553.8 527.3,544.2 530.0,544.2 532.7,553.8 535.0,544.2 537.5,553.8 540.2,544.2 542.6,553.8 545.3,544.2 548.6,553.8 555.8,553.8 558.0,563.5 560.7,553.8 563.7,553.8 566.4,534.5 569.1,553.8 573.8,524.9 576.6,544.2 581.7,524.9 584.7,534.5 586.7,534.5 589.1,519.6 590.5,486.3 591.8,476.7 594.6,476.7 597.3,451.2 600.0,428.4 602.1,428.4 606.3,409.1 607.3,399.5 609.5,399.5 612.2,389.8 617.6,389.8 620.9,380.2 622.5,386.4 625.2,370.5 628.5,360.9 633.4,360.9 635.6,351.3 638.3,351.3 641.0,332.0 648.4,332.0 651.1,322.3 655.5,332.0 658.6,322.3 662.0,322.3 666.0,303.0 676.2,303.0"/><g shape-rendering="crispEdges" stroke="#000" stroke-width="1" fill="none"><rect x="308.5" y="262.5" width="743" height="409"/><line x1="308" y1="421.5" x2="1052" y2="421.5"/><line x1="606.5" y1="262" x2="606.5" y2="672"/></g><circle cx="558.0" cy="563.0" r="3.5" fill="#d01010" stroke="#000" stroke-width="1"/><circle cx="519.0" cy="563.0" r="3.5" fill="#ffd200" stroke="#000" stroke-width="1"/><circle cx="540.0" cy="630.6" r="3.5" fill="#18a060" stroke="#000" stroke-width="1"/><circle cx="677.0" cy="380.0" r="3.5" fill="#18a060" stroke="#000" stroke-width="1"/><circle cx="666.0" cy="302.0" r="3.5" fill="#d01010" stroke="#000" stroke-width="1"/><circle cx="668.5" cy="302.0" r="3.5" fill="#ffc410" stroke="#000" stroke-width="1"/></svg>
<div class="c" style="left:562px;top:201px;color:#cc0000">曲线1</div>
<div class="c" style="left:612px;top:201px;color:#cc0000">21.40</div>
<div class="c" style="left:562px;top:216px;color:#ffd700">曲线2</div>
<div class="c" style="left:612px;top:216px;color:#ffd700">21.40</div>
<div class="c" style="left:562px;top:231px;color:#14a85c">曲线3</div>
<div class="c" style="left:612px;top:231px;color:#14a85c">20.60</div>
<div class="c" style="left:256px;top:252px;width:51px;text-align:right;">23.02</div>
<div class="c" style="left:256px;top:293px;width:51px;text-align:right;">22.60</div>
<div class="c" style="left:256px;top:334px;width:51px;text-align:right;">22.17</div>
<div class="c" style="left:256px;top:375px;width:51px;text-align:right;">21.75</div>
<div class="c" style="left:256px;top:416px;width:51px;text-align:right;">21.33</div>
<div class="c" style="left:256px;top:457px;width:51px;text-align:right;">20.90</div>
<div class="c" style="left:256px;top:498px;width:51px;text-align:right;">20.48</div>
<div class="c" style="left:256px;top:539px;width:51px;text-align:right;">20.05</div>
<div class="c" style="left:256px;top:580px;width:51px;text-align:right;">19.63</div>
<div class="c" style="left:256px;top:621px;width:51px;text-align:right;">19.20</div>
<div class="c" style="left:256px;top:661px;width:51px;text-align:right;">18.78</div>
<div class="c" style="left:1057px;top:421px;">21.38</div>
<div class="c" style="left:306px;top:677px;">0</div>
<div class="c" style="left:337px;top:677px;">1</div>
<div class="c" style="left:368px;top:677px;">2</div>
<div class="c" style="left:399px;top:677px;">3</div>
<div class="c" style="left:430px;top:677px;">4</div>
<div class="c" style="left:461px;top:677px;">5</div>
<div class="c" style="left:492px;top:677px;">6</div>
<div class="c" style="left:523px;top:677px;">7</div>
<div class="c" style="left:554px;top:677px;">8</div>
<div class="c" style="left:585px;top:677px;">9</div>
<div class="c" style="left:616px;top:677px;">10</div>
<div class="c" style="left:647px;top:677px;">11</div>
<div class="c" style="left:678px;top:677px;">12</div>
<div class="c" style="left:709px;top:677px;">13</div>
<div class="c" style="left:740px;top:677px;">14</div>
<div class="c" style="left:771px;top:677px;">15</div>
<div class="c" style="left:802px;top:677px;">16</div>
<div class="c" style="left:833px;top:677px;">17</div>
<div class="c" style="left:864px;top:677px;">18</div>
<div class="c" style="left:895px;top:677px;">19</div>
<div class="c" style="left:926px;top:677px;">20</div>
<div class="c" style="left:957px;top:677px;">21</div>
<div class="c" style="left:988px;top:677px;">22</div>
<div class="c" style="left:1019px;top:677px;">23</div>
<div class="c" style="left:1050px;top:677px;">0</div>
<div class="c" style="left:293px;top:692px;">2月3日</div>
<div class="c" style="left:1037px;top:692px;">2月4日</div>
<div class="c" style="left:591px;top:707px;">9时36分</div>
</div></body></html>
